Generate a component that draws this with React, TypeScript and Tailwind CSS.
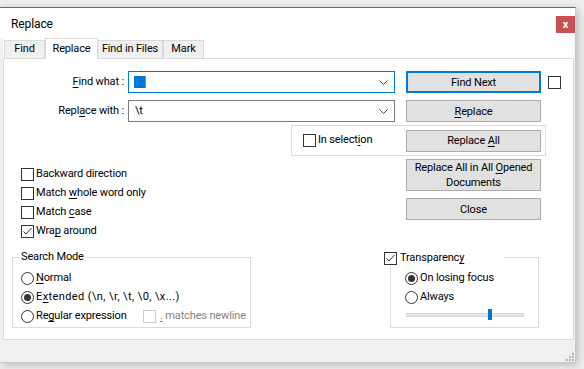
import React from "react";

// Notepad++ style "Replace" dialog

function Mn({ children }: { children: React.ReactNode }) {
  return <span className="underline decoration-1 underline-offset-[2px]">{children}</span>;
}

function CheckBox({ checked = false, disabled = false }: { checked?: boolean; disabled?: boolean }) {
  return (
    <span
      className={`flex h-[13px] w-[13px] shrink-0 items-center justify-center border bg-white ${
        disabled ? "border-[#cccccc]" : "border-[#333333]"
      }`}
    >
      {checked && (
        <svg width="11" height="11" viewBox="0 0 11 11">
          <polyline points="1.5,5.5 4,8 9.5,2" fill="none" stroke="#333333" strokeWidth="1" />
        </svg>
      )}
    </span>
  );
}

function Radio({ checked = false }: { checked?: boolean }) {
  return (
    <span className="flex h-[13px] w-[13px] shrink-0 items-center justify-center rounded-full border border-[#333333] bg-white">
      {checked && <span className="h-[7px] w-[7px] rounded-full bg-[#333333]" />}
    </span>
  );
}

function Button({
  children,
  primary = false,
  tall = false,
}: {
  children: React.ReactNode;
  primary?: boolean;
  tall?: boolean;
}) {
  return (
    <div
      className={`flex w-[135px] items-center justify-center bg-[#e1e1e1] text-center leading-[15px] ${
        tall ? "h-[32px]" : "h-[22px]"
      } ${primary ? "border-2 border-[#0078d7]" : "border border-[#adadad]"}`}
    >
      <span>{children}</span>
    </div>
  );
}

function Combo({ focused = false, children }: { focused?: boolean; children?: React.ReactNode }) {
  return (
    <div
      className={`flex h-[22px] w-[267px] items-center border bg-white pl-[5px] pr-[6px] ${
        focused ? "border-[#0078d7]" : "border-[#7a7a7a]"
      }`}
    >
      <div className="flex flex-1 items-center">{children}</div>
      <svg width="9" height="5" viewBox="0 0 9 5">
        <polyline points="0.5,0.5 4.5,4.5 8.5,0.5" fill="none" stroke="#444444" strokeWidth="1" />
      </svg>
    </div>
  );
}

export default function App() {
  const tabs = ["Find", "Replace", "Find in Files", "Mark"];
  const tabWidths = ["w-[41px]", "w-[53px]", "w-[65px]", "w-[41px]"];

  return (
    <div className="h-[369px] w-[584px] overflow-hidden bg-[#eeeeee] pt-[7px] font-['Roboto',sans-serif] text-[11px] tracking-[-0.15px] whitespace-nowrap text-black">
      <div className="flex h-[356px] w-[576px] flex-col border-t border-r border-b border-t-[#6b6b6b] border-r-[#c9c9c9] border-b-[#c9c9c9] bg-[#f0f0f0] shadow-[2px_2px_8px_rgba(0,0,0,0.22)]">
        {/* title bar */}
        <div className="flex h-[30px] items-start justify-between bg-white">
          <span className="mt-[7px] pl-[11px] text-[12px] tracking-[-0.1px]">Replace</span>
          <div className="mt-[8px] flex h-[17px] w-[19px] items-center justify-center bg-[#c75050] text-[11px] leading-none font-bold text-white">
            x
          </div>
        </div>

        <div className="flex flex-col pl-[3px] pr-[1px]">
          {/* tabs */}
          <div className="flex h-[20px] items-end bg-white pl-[1px]">
            {tabs.map((t, i) =>
              i === 1 ? (
                <div
                  key={t}
                  className={`relative z-10 -mb-px flex h-[21px] ${tabWidths[i]} items-start justify-center border border-b-0 border-[#d9d9d9] bg-white pt-[2px]`}
                >
                  {t}
                </div>
              ) : (
                <div
                  key={t}
                  className={`flex h-[18px] ${tabWidths[i]} items-center justify-center border border-b-0 border-[#d9d9d9] bg-[#f0f0f0] ${
                    i === 2 ? "border-l-0" : ""
                  }`}
                >
                  {t}
                </div>
              )
            )}
          </div>

          {/* panel */}
          <div className="flex h-[282px] flex-col border border-[#d9d9d9] bg-white">
            {/* find what */}
            <div className="mt-[12px] flex h-[22px] items-center">
              <div className="w-[120px] text-right">
                <Mn>F</Mn>ind what :
              </div>
              <div className="ml-[4px]">
                <Combo focused>
                  <span className="h-[12px] w-[12px] border-r border-r-[#e07a1f] bg-[#0078d7]" />
                </Combo>
              </div>
              <div className="ml-[11px]">
                <Button primary>Find Next</Button>
              </div>
              <div className="ml-[7px]">
                <CheckBox />
              </div>
            </div>

            {/* replace with */}
            <div className="mt-[7px] flex h-[22px] items-center">
              <div className="w-[120px] text-right">
                Repl<Mn>a</Mn>ce with :
              </div>
              <div className="ml-[4px]">
                <Combo>
                  <span className="pl-[1px]">\t</span>
                </Combo>
              </div>
              <div className="ml-[11px]">
                <Button>
                  <Mn>R</Mn>eplace
                </Button>
              </div>
            </div>

            {/* in selection group */}
            <div className="mt-[3px] ml-[287px] flex h-[31px] w-[255px] items-center border border-[#dcdcdc] pl-[11px]">
              <CheckBox />
              <span className="ml-[2px]">
                In select<Mn>i</Mn>on
              </span>
              <div className="mr-[4px] ml-auto">
                <Button>
                  Replace <Mn>A</Mn>ll
                </Button>
              </div>
            </div>

            <div className="flex">
              {/* left column */}
              <div className="flex w-[380px] flex-col">
                <div className="mt-[12px] ml-[17px] flex flex-col gap-[6px]">
                  <label className="flex h-[13px] items-center gap-[2px]">
                    <CheckBox />
                    <span>Backward direction</span>
                  </label>
                  <label className="flex h-[13px] items-center gap-[2px]">
                    <CheckBox />
                    <span>
                      Match <Mn>w</Mn>hole word only
                    </span>
                  </label>
                  <label className="flex h-[13px] items-center gap-[2px]">
                    <CheckBox />
                    <span>
                      Match <Mn>c</Mn>ase
                    </span>
                  </label>
                  <label className="flex h-[13px] items-center gap-[2px]">
                    <CheckBox checked />
                    <span>
                      Wra<Mn>p</Mn> around
                    </span>
                  </label>
                </div>

                {/* search mode */}
                <div className="relative mt-[19px] ml-[8px] flex h-[71px] w-[239px] flex-col gap-[6px] border border-[#dcdcdc] pt-[14px] pl-[8px]">
                  <span className="absolute -top-[9px] left-[7px] bg-white px-[1px] leading-[16px]">Search Mode</span>
                  <label className="flex h-[13px] items-center gap-[2px]">
                    <Radio />
                    <span>
                      <Mn>N</Mn>ormal
                    </span>
                  </label>
                  <label className="flex h-[13px] items-center gap-[2px]">
                    <Radio checked />
                    <span className="tracking-[0.4px]">
                      E<Mn>x</Mn>tended (\n, \r, \t, \0, \x...)
                    </span>
                  </label>
                  <div className="flex h-[13px] items-center">
                    <label className="flex w-[122px] items-center gap-[2px]">
                      <Radio />
                      <span>
                        Re<Mn>g</Mn>ular expression
                      </span>
                    </label>
                    <label className="flex items-center gap-[4px] text-[#838383]">
                      <CheckBox disabled />
                      <span>
                        <Mn>.</Mn> matches newline
                      </span>
                    </label>
                  </div>
                </div>
              </div>

              {/* right column */}
              <div className="flex flex-col">
                <div className="mt-[3px] ml-[22px] flex flex-col gap-[7px]">
                  <Button tall>
                    Replace All in All <Mn>O</Mn>pened
                    <br />
                    Documents
                  </Button>
                  <Button>Close</Button>
                </div>

                <div className="relative mt-[37px] ml-[6px] flex h-[71px] w-[149px] flex-col border border-[#dcdcdc] pt-[14px] pl-[14px]">
                  <label className="absolute -top-[6px] -left-[7px] flex h-[13px] w-[120px] items-center gap-[3px] bg-white">
                    <CheckBox checked />
                    <span>
                      Transparenc<Mn>y</Mn>
                    </span>
                  </label>
                  <div className="flex flex-col gap-[6px]">
                    <label className="flex h-[13px] items-center gap-[2px]">
                      <Radio checked />
                      <span>On losing focus</span>
                    </label>
                    <label className="flex h-[13px] items-center gap-[2px]">
                      <Radio />
                      <span>Always</span>
                    </label>
                  </div>
                  <div className="relative mt-[9px] ml-[1px] h-[4px] w-[118px] border border-[#d6d6d6] bg-[#e7eaea]">
                    <span className="absolute -top-[5px] left-[81px] h-[11px] w-[4px] bg-[#0078d7]" />
                  </div>
                </div>
              </div>
            </div>
          </div>
        </div>

        {/* status strip with grip */}
        <div className="flex h-[22px] items-end justify-end pr-[1px] pb-[1px]">
          <svg width="8" height="8" viewBox="0 0 8 8">
            <rect x="6" y="0" width="2" height="2" fill="#b5b5b5" />
            <rect x="3" y="3" width="2" height="2" fill="#b5b5b5" />
            <rect x="6" y="3" width="2" height="2" fill="#b5b5b5" />
            <rect x="0" y="6" width="2" height="2" fill="#b5b5b5" />
            <rect x="3" y="6" width="2" height="2" fill="#b5b5b5" />
            <rect x="6" y="6" width="2" height="2" fill="#b5b5b5" />
          </svg>
        </div>
      </div>
    </div>
  );
}
